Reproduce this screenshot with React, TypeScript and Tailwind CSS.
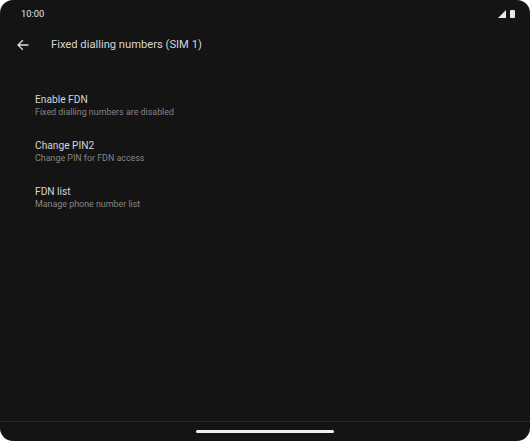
const items = [
  { title: "Enable FDN", sub: "Fixed dialling numbers are disabled" },
  { title: "Change PIN2", sub: "Change PIN for FDN access" },
  { title: "FDN list", sub: "Manage phone number list" },
];

export default function App() {
  return (
    <div className="flex h-[441px] w-[530px] flex-col overflow-hidden rounded-[13px] bg-[#141414] font-['Roboto',sans-serif]">
      <div className="flex h-[27px] items-center justify-between pl-[21px] pr-[15px]">
        <span className="text-[9.3px] leading-none font-normal text-[#e6e6e6]">10:00</span>
        <div className="flex items-center gap-[4px]">
          <svg width="8" height="8" viewBox="0 0 8 8">
            <path d="M8 0V8H0Z" fill="#e8e8e8" />
          </svg>
          <div className="h-[8px] w-[5px] rounded-[1px] bg-[#e8e8e8]" />
        </div>
      </div>

      <div className="flex h-[34px] items-center pl-[17px] pt-[1px]">
        <svg width="12" height="12" viewBox="0 0 12 12" fill="none" stroke="#e0e0e0" strokeWidth="1.3">
          <path d="M11.5 6H1M5.8 1.2 1 6l4.8 4.8" />
        </svg>
        <h1 className="ml-[22px] text-[11.2px] leading-none font-normal text-[#d6d6d6]">
          Fixed dialling numbers (SIM 1)
        </h1>
      </div>

      <div className="flex flex-1 flex-col pt-[32px] pl-[35px]">
        {items.map((item) => (
          <div key={item.title} className="h-[46px]">
            <p className="text-[10.2px] leading-[14px] text-[#d6d6d6]">{item.title}</p>
            <p className="text-[8.9px] leading-[11px] text-[#858585]">{item.sub}</p>
          </div>
        ))}
      </div>

      <div className="flex h-[20px] justify-center border-t border-[#2a2a2a] pt-[8px]">
        <div className="h-[3px] w-[138px] rounded-full bg-[#f0f0f0]" />
      </div>
    </div>
  );
}
